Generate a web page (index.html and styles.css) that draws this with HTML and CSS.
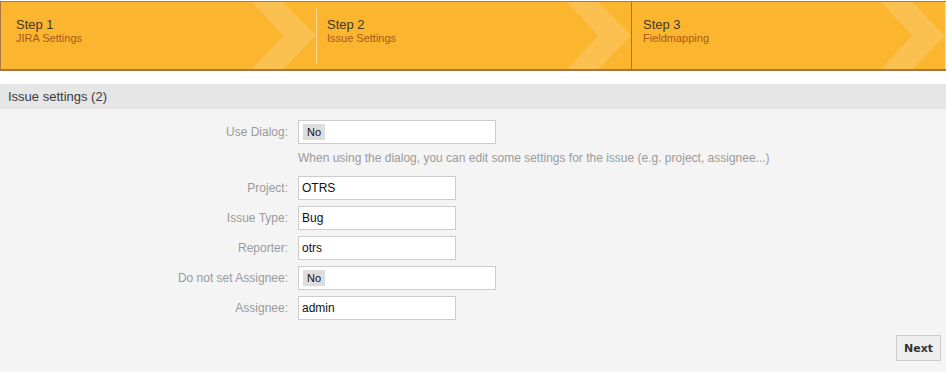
FILE: index.html
```html
<!DOCTYPE html>
<html lang="en">

<head>
    <meta charset="UTF-8">
    <title>Issue settings</title>
    <link rel="stylesheet" href="styles.css">
</head>

<body>
    <div class="steps">
        <div class="step step-done">
            <span class="step-title">Step 1</span>
            <span class="step-sub">JIRA Settings</span>
        </div>
        <div class="step step-current">
            <span class="step-title">Step 2</span>
            <span class="step-sub">Issue Settings</span>
        </div>
        <div class="step step-last">
            <span class="step-title">Step 3</span>
            <span class="step-sub">Fieldmapping</span>
        </div>
    </div>

    <div class="widget">
        <h2 class="widget-header">Issue settings (2)</h2>
        <div class="widget-content">
            <form class="settings">
                <div class="row">
                    <label class="row-label">Use Dialog:</label>
                    <div class="row-field">
                        <div class="picker"><span class="picker-tag">No</span></div>
                        <p class="hint">When using the dialog, you can edit some settings for the issue (e.g. project, assignee...)</p>
                    </div>
                </div>
                <div class="row">
                    <label class="row-label">Project:</label>
                    <div class="row-field"><div class="text-box">OTRS</div></div>
                </div>
                <div class="row">
                    <label class="row-label">Issue Type:</label>
                    <div class="row-field"><div class="text-box">Bug</div></div>
                </div>
                <div class="row">
                    <label class="row-label">Reporter:</label>
                    <div class="row-field"><div class="text-box">otrs</div></div>
                </div>
                <div class="row">
                    <label class="row-label">Do not set Assignee:</label>
                    <div class="row-field">
                        <div class="picker"><span class="picker-tag">No</span></div>
                    </div>
                </div>
                <div class="row">
                    <label class="row-label">Assignee:</label>
                    <div class="row-field"><div class="text-box">admin</div></div>
                </div>
                <div class="actions">
                    <button type="button" class="btn">Next</button>
                </div>
            </form>
        </div>
    </div>
</body>

</html>
```

FILE: styles.css
```css
html {
    font-family: "Liberation Sans", Arial, sans-serif;
    font-size: 12px;
}

body {
    margin: 0;
    background-color: #ffffff;
    height: 372px;
    display: flex;
    flex-direction: column;
}

.steps {
    display: flex;
    margin: 1px 1px 0 0;
    height: 67px;
    background-color: #fbb52f;
    border-top: 1px solid #a87a45;
    border-bottom: 2px solid #a87444;
    border-left: 1px solid #a87a45;
}

.step {
    position: relative;
    display: flex;
    flex-direction: column;
    width: 315px;
    padding: 16px 0 0 15px;
    box-sizing: border-box;
}

/* chevron decoration */
.step::before {
    content: "";
    position: absolute;
    top: 0;
    right: 0;
    width: 64px;
    height: 100%;
    background-color: rgba(255, 255, 255, 0.16);
    clip-path: polygon(0 0, 49% 0, 100% 50%, 49% 100%, 0 100%, 49% 50%);
}

.step-done {
    width: 316px;
}

.step-done::after {
    content: "";
    position: absolute;
    top: 6px;
    bottom: 5px;
    right: 0;
    width: 1px;
    background-color: #f9d591;
}

.step-done::before {
    right: 1px;
}

.step-current {
    width: 315px;
    padding-left: 10px;
    border-right: 1px solid #a0733f;
}

.step-last {
    flex: 1;
    padding-left: 11px;
    border-right: 1px solid #fde3b2;
}

.step-title {
    font-size: 13px;
    color: #45392a;
    line-height: 14px;
}

.step-sub {
    font-size: 11px;
    color: #a8581a;
    line-height: 13px;
}

.widget {
    flex: 1;
    display: flex;
    flex-direction: column;
    margin: 13px 1px 0 0;
}

.widget-header {
    margin: 0;
    height: 25px;
    line-height: 25px;
    padding-left: 8px;
    font-size: 13px;
    font-weight: normal;
    color: #3a3a3a;
    background-color: #e6e6e6;
}

.widget-content {
    flex: 1;
    background-color: #f4f4f4;
    padding-top: 11px;
}

.row {
    display: flex;
    gap: 10px;
    margin-bottom: 6px;
}

.row-label {
    width: 288px;
    text-align: right;
    color: #9a9a9a;
    line-height: 24px;
}

.row-field {
    display: flex;
    flex-direction: column;
}

.picker,
.text-box {
    height: 22px;
    border: 1px solid #cccccc;
    background-color: #ffffff;
    box-sizing: content-box;
}

.picker {
    width: 192px;
    display: flex;
    align-items: center;
    padding-left: 4px;
}

.picker-tag {
    background-color: #dddddd;
    color: #111111;
    font-size: 11px;
    padding: 0 4px;
    line-height: 16px;
}

.text-box {
    width: 153px;
    padding-left: 3px;
    line-height: 22px;
    font-size: 12px;
    color: #111111;
}

.hint {
    margin: 7px 0 5px;
    color: #9a9a9a;
    line-height: 14px;
}

.actions {
    display: flex;
    justify-content: flex-end;
    padding: 9px 5px 0 0;
}

.btn {
    height: 26px;
    padding: 0 7px;
    border: 1px solid #cccccc;
    background-color: #eeeeee;
    font-family: "DejaVu Sans", sans-serif;
    font-size: 11px;
    font-weight: bold;
    color: #333333;
}
```
